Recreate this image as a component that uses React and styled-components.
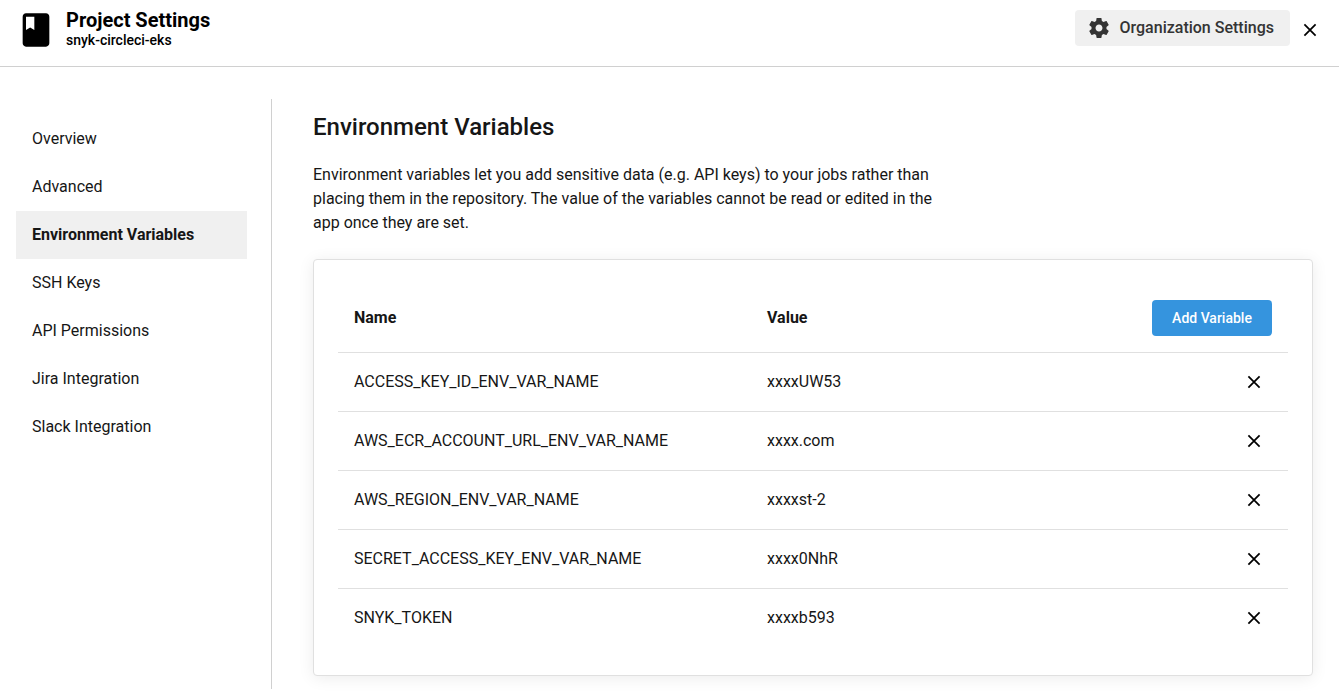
import React from "react";
import styled, { createGlobalStyle } from "styled-components";

const GlobalStyle = createGlobalStyle`
  *, *::before, *::after { box-sizing: border-box; }
  body {
    margin: 0;
    background: #fff;
    color: #161616;
    font-family: Roboto, "Liberation Sans", sans-serif;
    font-size: 16px;
    line-height: 24px;
    -webkit-font-smoothing: antialiased;
  }
  button { font: inherit; border: 0; padding: 0; cursor: pointer; }
  svg { display: block; fill: currentColor; }
`;

const Page = styled.div`
  height: 694px;
  display: flex;
  flex-direction: column;
  overflow: hidden;
`;

const Header = styled.header`
  flex: none;
  display: flex;
  justify-content: space-between;
  height: 67px;
  padding: 10px 17px 0 16px;
  border-bottom: 1px solid #d0d0d0;
  color: #000;
`;

const Brand = styled.div`
  display: flex;
  gap: 10px;
`;

const Title = styled.h1`
  margin: -2px 0 0;
  font-size: 20px;
  font-weight: 700;
  line-height: 24px;
`;

const Subtitle = styled.div`
  font-size: 14px;
  font-weight: 500;
  line-height: 16px;
`;

const HeaderActions = styled.div`
  display: flex;
  align-items: flex-start;
  gap: 8px;
`;

const OrgButton = styled.button`
  display: flex;
  align-items: center;
  gap: 8.5px;
  width: 215px;
  height: 36px;
  padding: 0 12px;
  border-radius: 4px;
  background: #f0f0f0;
  color: #343434;
  font-weight: 500;
  white-space: nowrap;
`;

const IconButton = styled.button`
  display: grid;
  place-items: center;
  width: 24px;
  height: 24px;
  margin-top: ${(p) => p.$top || "0"};
  background: none;
  color: #000;
`;

const Body = styled.div`
  display: flex;
  padding-top: 32px;
  height: 622px;
`;

const Sidebar = styled.nav`
  flex: none;
  width: 272px;
  padding: 16px 24px 0 16px;
  border-right: 1px solid #d0d0d0;
`;

const NavItem = styled.a`
  display: flex;
  align-items: center;
  height: 48px;
  padding: 0 16px;
  background: ${(p) => (p.$active ? "#f0f0f0" : "transparent")};
  font-weight: ${(p) => (p.$active ? 700 : 400)};
`;

const Content = styled.main`
  flex: 1;
  padding: 12px 26px 0 41px;
`;

const Heading = styled.h2`
  margin: 0;
  font-size: 24px;
  font-weight: 500;
  line-height: 32px;
`;

const Description = styled.p`
  width: 640px;
  margin: 20px 0 24px;
`;

const Card = styled.section`
  height: 417px;
  padding: 24px;
  border: 1px solid #e0e0e0;
  border-radius: 4px;
  background: #fff;
  box-shadow: 0 2px 16px rgba(0, 0, 0, 0.08);
`;

const Row = styled.div`
  display: grid;
  grid-template-columns: 413px 1fr auto;
  align-items: center;
  height: 59px;
  padding: 0 22px 0 16px;
  border-top: 1px solid #e0e0e0;
`;

const HeadRow = styled(Row)`
  height: 68px;
  padding-right: 16px;
  border-top: 0;
  font-weight: 700;
`;

const AddButton = styled.button`
  width: 120px;
  height: 36px;
  border-radius: 4px;
  background: #3594de;
  color: #fff;
  font-size: 14px;
  font-weight: 500;
`;

const BookIcon = () => (
  <svg width="40" height="40" viewBox="0 0 24 24">
    <path d="M18 2H6c-1.1 0-2 .9-2 2v16c0 1.1.9 2 2 2h12c1.1 0 2-.9 2-2V4c0-1.1-.9-2-2-2zM6 4h5v8l-2.5-1.5L6 12V4z" />
  </svg>
);

const GearIcon = () => (
  <svg width="24" height="24" viewBox="0 0 24 24">
    <path d="M19.43 12.98c.04-.32.07-.64.07-.98s-.03-.66-.07-.98l2.11-1.65c.19-.15.24-.42.12-.64l-2-3.46c-.12-.22-.39-.3-.61-.22l-2.49 1c-.52-.4-1.08-.73-1.69-.98l-.38-2.65C14.46 2.18 14.25 2 14 2h-4c-.25 0-.46.18-.49.42l-.38 2.65c-.61.25-1.17.59-1.69.98l-2.49-1c-.23-.09-.49 0-.61.22l-2 3.46c-.13.22-.07.49.12.64l2.11 1.65c-.04.32-.07.65-.07.98s.03.66.07.98l-2.11 1.65c-.19.15-.24.42-.12.64l2 3.46c.12.22.39.3.61.22l2.49-1c.52.4 1.08.73 1.69.98l.38 2.65c.03.24.24.42.49.42h4c.25 0 .46-.18.49-.42l.38-2.65c.61-.25 1.17-.59 1.69-.98l2.49 1c.23.09.49 0 .61-.22l2-3.46c.12-.22.07-.49-.12-.64l-2.11-1.65zM12 15.5c-1.93 0-3.5-1.57-3.5-3.5s1.57-3.5 3.5-3.5 3.5 1.57 3.5 3.5-1.57 3.5-3.5 3.5z" />
  </svg>
);

const CloseIcon = () => (
  <svg width="14" height="14" viewBox="0 0 14 14" fill="none">
    <path d="M1.4 1.4l11.2 11.2M12.6 1.4L1.4 12.6" stroke="currentColor" strokeWidth="1.75" />
  </svg>
);

const navItems = [
  "Overview",
  "Advanced",
  "Environment Variables",
  "SSH Keys",
  "API Permissions",
  "Jira Integration",
  "Slack Integration",
];

const variables = [
  ["ACCESS_KEY_ID_ENV_VAR_NAME", "xxxxUW53"],
  ["AWS_ECR_ACCOUNT_URL_ENV_VAR_NAME", "xxxx.com"],
  ["AWS_REGION_ENV_VAR_NAME", "xxxxst-2"],
  ["SECRET_ACCESS_KEY_ENV_VAR_NAME", "xxxx0NhR"],
  ["SNYK_TOKEN", "xxxxb593"],
];

export default function App() {
  return (
    <Page>
      <GlobalStyle />
      <Header>
        <Brand>
          <BookIcon />
          <div>
            <Title>Project Settings</Title>
            <Subtitle>snyk-circleci-eks</Subtitle>
          </div>
        </Brand>
        <HeaderActions>
          <OrgButton>
            <GearIcon />
            Organization Settings
          </OrgButton>
          <IconButton $top="8px" aria-label="Close">
            <CloseIcon />
          </IconButton>
        </HeaderActions>
      </Header>
      <Body>
        <Sidebar>
          {navItems.map((item) => (
            <NavItem key={item} $active={item === "Environment Variables"}>
              {item}
            </NavItem>
          ))}
        </Sidebar>
        <Content>
          <Heading>Environment Variables</Heading>
          <Description>
            Environment variables let you add sensitive data (e.g. API keys) to your jobs rather than
            placing them in the repository. The value of the variables cannot be read or edited in the
            app once they are set.
          </Description>
          <Card>
            <HeadRow>
              <span>Name</span>
              <span>Value</span>
              <AddButton>Add Variable</AddButton>
            </HeadRow>
            {variables.map(([name, value]) => (
              <Row key={name}>
                <span>{name}</span>
                <span>{value}</span>
                <IconButton aria-label={"Delete " + name}>
                  <CloseIcon />
                </IconButton>
              </Row>
            ))}
          </Card>
        </Content>
      </Body>
    </Page>
  );
}
